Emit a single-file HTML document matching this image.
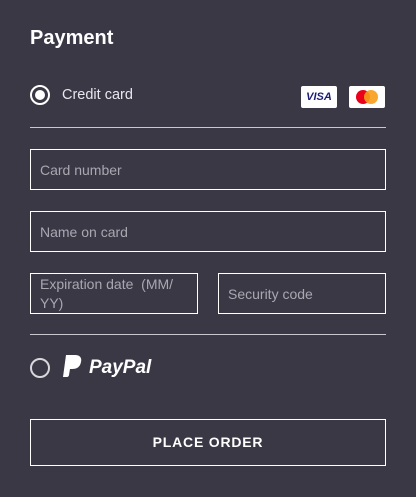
<!DOCTYPE html><html><head><style>
body{margin:0;width:416px;height:497px;background:#3a3845;font-family:"Liberation Sans",sans-serif;position:relative;overflow:hidden;color:#fff}
.a{position:absolute}
.in{position:absolute;border:1.5px solid #fff;box-sizing:border-box;color:#a9a7b0;font-size:14px;padding-left:9px;display:flex;align-items:center}
</style></head><body>
<div class="a" style="left:30px;top:27px;font-size:20px;font-weight:bold">Payment</div>
<div class="a" style="left:30px;top:85px;width:20px;height:20px;border:2px solid #fff;border-radius:50%;box-sizing:border-box"></div>
<div class="a" style="left:35px;top:90px;width:10px;height:10px;background:#fff;border-radius:50%"></div>
<div class="a" style="left:62px;top:87px;font-size:14.5px;color:#e8e7ec">Credit card</div>
<div class="a" style="left:301px;top:86px;width:36px;height:22px;background:#fff;border-radius:2px;color:#1a1f71;font-size:11px;font-weight:bold;font-style:italic;text-align:center;line-height:22px">VISA</div>
<div class="a" style="left:349px;top:86px;width:36px;height:22px;background:#fff;border-radius:2px"></div>
<div class="a" style="left:356px;top:90px;width:14px;height:14px;background:#eb001b;border-radius:50%"></div>
<div class="a" style="left:364px;top:90px;width:14px;height:14px;background:#f79e1b;border-radius:50%;opacity:.9"></div>
<div class="a" style="left:30px;top:127px;width:356px;height:1px;background:#c9c8ce"></div>
<div class="in" style="left:30px;top:149px;width:356px;height:41px">Card number</div>
<div class="in" style="left:30px;top:211px;width:356px;height:41px">Name on card</div>
<div class="in" style="left:30px;top:273px;width:168px;height:41px;line-height:19px;align-items:flex-start;padding-top:1px">Expiration date&nbsp; (MM/<br>YY)</div>
<div class="in" style="left:218px;top:273px;width:168px;height:41px">Security code</div>
<div class="a" style="left:30px;top:334px;width:356px;height:1px;background:#c9c8ce"></div>
<div class="a" style="left:30px;top:358px;width:20px;height:20px;border:2px solid #d8d7dc;border-radius:50%;box-sizing:border-box"></div>
<svg class="a" style="left:62px;top:355px" width="22" height="24" viewBox="0 0 22 24"><path d="M4 0h9c5 0 7 3 6 7-1 5-4 7-9 7H8l-1 6c0 1-1 2-2 2H1L4 0z" fill="#fff"/></svg>
<div class="a" style="left:89px;top:357px;font-size:19px;font-weight:bold;font-style:italic">PayPal</div>
<div class="a" style="left:30px;top:419px;width:356px;height:47px;border:1.5px solid #fff;box-sizing:border-box;text-align:center;line-height:44px;font-size:14px;font-weight:bold;letter-spacing:.8px">PLACE ORDER</div>
</body></html>
